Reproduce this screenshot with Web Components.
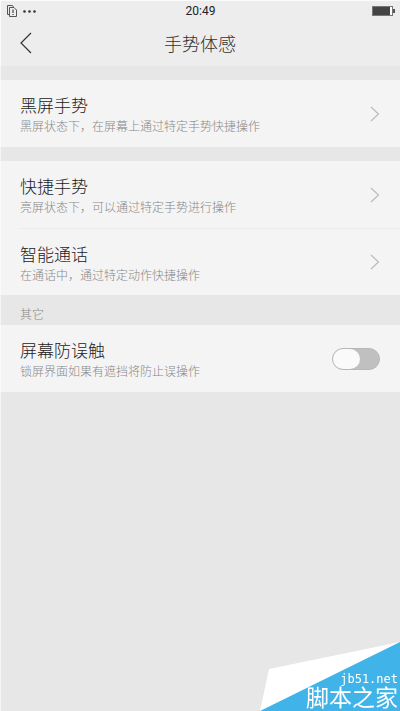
<!DOCTYPE html>
<html lang="zh-CN">
<head>
<meta charset="utf-8">
<meta name="viewport" content="width=device-width, initial-scale=1">
<title>手势体感</title>
<style>
html, body { margin: 0; min-height: 100vh; }
body { background: #e7e7e7; font-family: "Liberation Sans", "Noto Sans CJK SC", sans-serif; font-weight: 300; color: #333; }
</style>
</head>
<body>
<gesture-page></gesture-page>
<script>
class BaseElement extends HTMLElement {
  connectedCallback() {
    if (this.shadowRoot) return;
    this.attachShadow({ mode: "open" }).innerHTML =
      "<style>*{box-sizing:border-box}" + this.css() + "</style>" + this.html();
  }
}

customElements.define("status-bar", class extends BaseElement {
  css() { return `
    :host { display: grid; grid-template-columns: 1fr auto 1fr; align-items: center; height: 20px; padding: 0 5px 0 6px; border-top: 1px solid #fbfbfb; }
    .left { display: flex; align-items: center; gap: 5px; }
    svg { display: block; }
    .right { justify-self: end; }
    time { font: 12px/20px Roboto, sans-serif; color: #222; }`; }
  html() { return `
    <div class="left">
      <svg width="12" height="12" viewBox="0 0 12 12" fill="none" stroke="#555" stroke-width="1"><path d="M3 9.500H1.500V.5H6.500L7.500 2"/><path d="M3.500 2.500H8L10.500 5V11.500H3.500Z"/><path d="M7 4.500V8M7 9V10" stroke-width="1.300"/></svg>
      <svg width="14" height="3" viewBox="0 0 14 3" fill="#333"><circle cx="1.500" cy="1.500" r="1.300"/><circle cx="6.500" cy="1.500" r="1.300"/><circle cx="11.500" cy="1.500" r="1.300"/></svg>
    </div>
    <time>20:49</time>
    <svg class="right" width="23" height="10" viewBox="0 0 23 10"><rect x=".5" y=".5" width="20" height="9" fill="#fff" stroke="#777"/><rect x="1" y="1" width="17" height="8" fill="#444"/><rect x="21" y="3" width="2" height="4" fill="#555"/></svg>`; }
});

customElements.define("title-bar", class extends BaseElement {
  css() { return `
    :host { display: grid; grid-template-columns: 48px 1fr 48px; align-items: center; height: 46px; }
    button { border: 0; background: none; padding: 0 0 0 20px; height: 46px; }
    svg { display: block; }
    h1 { margin: 0; padding-top: 4px; font-size: 18px; line-height: 24px; font-weight: inherit; text-align: center; color: #333; }`; }
  html() { return `
    <button type="button" aria-label="返回"><svg width="12" height="22" viewBox="0 0 12 22" fill="none" stroke="#333" stroke-width="1.200"><path d="M11 1L1 11L11 21"/></svg></button>
    <h1><slot></slot></h1>`; }
});

customElements.define("row-text", class extends BaseElement {
  css() { return `
    :host { display: block; flex: 1; min-width: 0; padding-top: 4px; }
    .t { display: block; font-size: 17px; line-height: 24px; color: #222; }
    .d { display: block; font-size: 12px; line-height: 17px; color: #888; }`; }
  html() { return `<span class="t"><slot name="title"></slot></span><span class="d"><slot></slot></span>`; }
});

customElements.define("link-row", class extends BaseElement {
  css() { return `
    :host { display: block; }
    a { display: flex; align-items: center; height: 67px; margin-left: 20px; padding-right: 20px; text-decoration: none; }
    :host([divided]) a { border-top: 1px solid #ebebeb; }
    svg { flex: none; }`; }
  html() { return `
    <a href="#"><row-text><slot name="title" slot="title"></slot><slot></slot></row-text>
    <svg width="10" height="16" viewBox="0 0 10 16" fill="none" stroke="#bbb" stroke-width="1.200"><path d="M1 1L8.500 8L1 15"/></svg></a>`; }
});

customElements.define("switch-row", class extends BaseElement {
  css() { return `
    :host { display: block; }
    label { display: flex; align-items: center; height: 67px; padding: 0 20px; }
    input { appearance: none; flex: none; margin: 0; width: 48px; height: 22px; border: 1px solid #b8b8b8; border-radius: 11px; background: #c0c0c0; display: flex; }
    input::before { content: ""; width: 27px; height: 20px; border-radius: 10px; background: #fafafa; }
    input:checked { background: #4db870; justify-content: flex-end; }`; }
  html() { return `
    <label><row-text><slot name="title" slot="title"></slot><slot></slot></row-text><input type="checkbox" role="switch"></label>`; }
});

customElements.define("row-group", class extends BaseElement {
  css() { return `
    :host { display: block; background: #f4f4f4; box-shadow: inset 1px 0 #fafafa; }`; }
  html() { return `<slot></slot>`; }
});

customElements.define("site-mark", class extends BaseElement {
  css() { return `
    :host { position: fixed; right: 0; bottom: 0; width: 140px; height: 69px; }
    svg { position: absolute; inset: 0; }
    div { position: absolute; right: 2px; bottom: 0; text-align: right; color: #fff; font-weight: 400; }
    span { display: block; font: 12px/14px "DejaVu Sans Mono", monospace; }
    strong { display: block; font-size: 23px; line-height: 25px; font-weight: inherit; }`; }
  html() { return `
    <svg width="140" height="69" viewBox="0 0 140 69"><path d="M0 69L9 27L140 0V69Z" fill="#fff"/><path d="M0 69L140 0V69Z" fill="#40b4e8"/></svg>
    <div><span>jb51.net</span><strong>脚本之家</strong></div>`; }
});

customElements.define("gesture-page", class extends BaseElement {
  css() { return `
    :host { display: block; min-height: 100vh; box-shadow: inset 1px 0 #f4f4f4; }
    header { background: #ededed; box-shadow: inset 1px 0 #fafafa; }
    main { display: flex; flex-direction: column; gap: 14px; padding-top: 14px; }
    h2 { margin: 0; padding: 8px 20px 0; height: 30px; font-size: 12px; line-height: 24px; font-weight: inherit; color: #888; }`; }
  html() { return `
    <header><status-bar></status-bar><title-bar>手势体感</title-bar></header>
    <main>
      <row-group><link-row><span slot="title">黑屏手势</span>黑屏状态下，在屏幕上通过特定手势快捷操作</link-row></row-group>
      <div>
        <row-group>
          <link-row><span slot="title">快捷手势</span>亮屏状态下，可以通过特定手势进行操作</link-row>
          <link-row divided><span slot="title">智能通话</span>在通话中，通过特定动作快捷操作</link-row>
        </row-group>
        <h2>其它</h2>
        <row-group><switch-row><span slot="title">屏幕防误触</span>锁屏界面如果有遮挡将防止误操作</switch-row></row-group>
      </div>
    </main>
    <site-mark></site-mark>`; }
});
</script>
</body>
</html>
